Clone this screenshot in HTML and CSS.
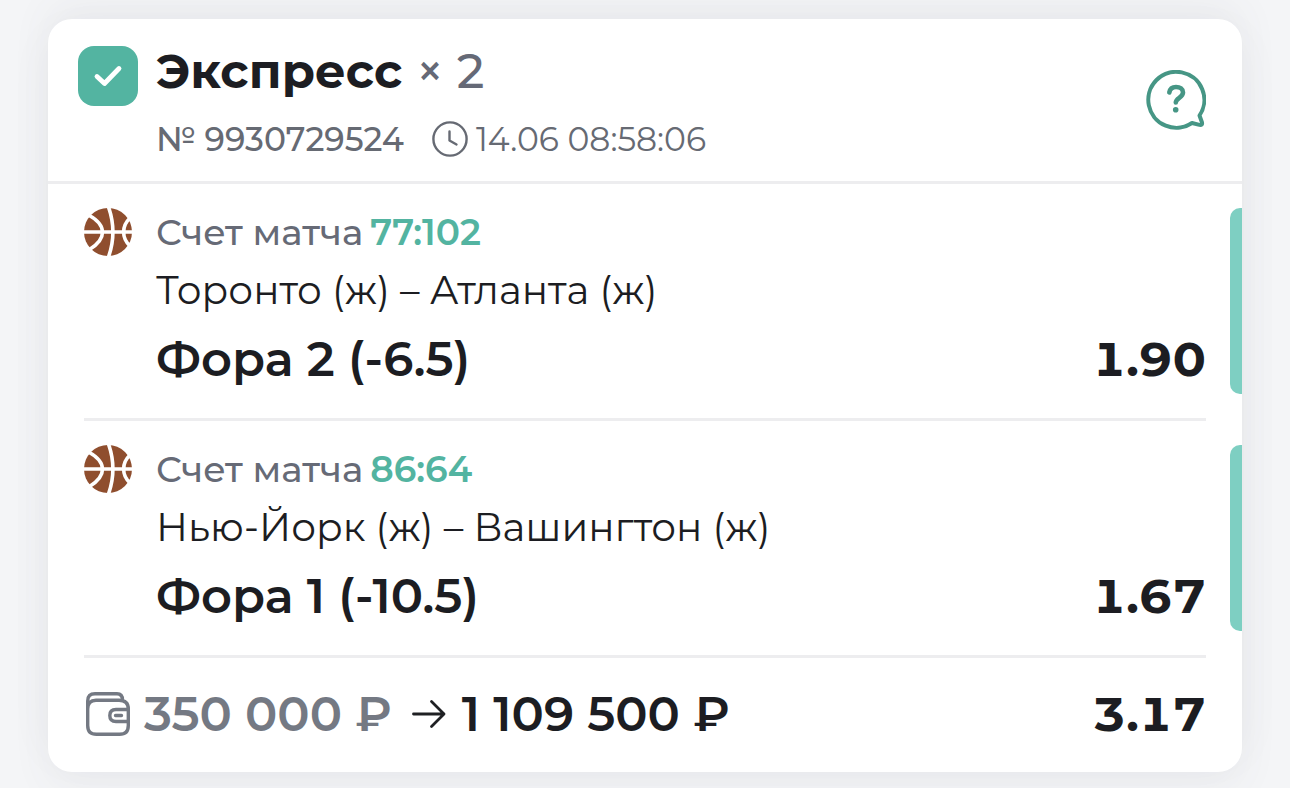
FILE: index.html
```html
<!DOCTYPE html>
<html lang="ru">
<head>
<meta charset="utf-8">
<meta name="viewport" content="width=device-width, initial-scale=1">
<title>Экспресс</title>
<link rel="stylesheet" href="styles.css">
</head>
<body>
<svg class="sprite" aria-hidden="true">
  <symbol id="ball" viewBox="0 0 48 48">
    <circle cx="24" cy="24" r="24" fill="#8f4e2e"/>
    <g fill="none" stroke="#fff" stroke-width="3.6">
      <path d="M0 24H48M24.500 -1C30.500 16 30.500 32 24.500 49M4.500 7C23 17 23 31 5.500 41.500M46 10C37.500 18 37.500 30 46 38"/>
    </g>
  </symbol>
</svg>
<main class="page">
  <article class="card">
    <header class="head">
      <label class="check">
        <input class="check-box" type="checkbox" checked aria-label="Экспресс">
        <svg class="check-mark" viewBox="0 0 60 60" aria-hidden="true"><path d="M19 30.500l7.500 7L41 22.500" fill="none" stroke="#fff" stroke-width="4.800" stroke-linecap="round" stroke-linejoin="round"/></svg>
      </label>
      <div class="head-text">
        <h1 class="title">Экспресс <span class="count">× 2</span></h1>
        <div class="meta">
          <span class="number">№ 9930729524</span>
          <span class="time">
            <svg class="clock" viewBox="0 0 36 36" aria-hidden="true"><g fill="none" stroke="#666a73" stroke-width="2.400" stroke-linecap="round" stroke-linejoin="round"><circle cx="18" cy="18" r="16.600"/><path d="M17.500 10.500V19.500L24.500 23.500"/></g></svg>
            <time>14.06 08:58:06</time>
          </span>
        </div>
      </div>
      <button class="help" type="button" aria-label="Помощь">
        <svg viewBox="0 0 60 60" aria-hidden="true">
          <g fill="none" stroke="#469685" stroke-width="4" stroke-linecap="round" stroke-linejoin="round">
            <path d="M53.500 45.500A28 28 0 1 0 46 53L53.500 54.900Q56.600 55.500 56 52.500Z"/>
            <path stroke-width="4.600" d="M23.300 22.500C24 18.500 26 17 30 17C34 17 37 19 37 22.500C37 27.500 29.800 28 29.800 32.500"/>
          </g>
          <circle cx="29.700" cy="39.700" r="2.800" fill="#469685"/>
        </svg>
      </button>
    </header>

    <section class="event">
      <svg class="ball" aria-hidden="true"><use href="#ball"/></svg>
      <div class="event-text">
        <p class="score"><span>Счет матча</span><b>77:102</b></p>
        <p class="teams">Торонто (ж) – Атланта (ж)</p>
        <div class="bet"><h2>Фора 2 (-6.5)</h2><span class="odds">1.90</span></div>
      </div>
      <span class="stripe"></span>
    </section>

    <section class="event">
      <svg class="ball" aria-hidden="true"><use href="#ball"/></svg>
      <div class="event-text">
        <p class="score"><span>Счет матча</span><b>86:64</b></p>
        <p class="teams">Нью-Йорк (ж) – Вашингтон (ж)</p>
        <div class="bet"><h2>Фора 1 (-10.5)</h2><span class="odds">1.67</span></div>
      </div>
      <span class="stripe"></span>
    </section>

    <footer class="foot">
      <svg class="wallet" viewBox="0 0 44 44" aria-hidden="true">
        <g fill="none" stroke="#747983" stroke-width="3.400" stroke-linejoin="round" stroke-linecap="round">
          <path d="M1.700 17Q1.700 8.200 10 8.200H33Q42.300 8.200 42.300 17V33.500Q42.300 42.300 33.500 42.300H10.500Q1.700 42.300 1.700 33.500ZM1.700 17V9Q1.700 1.700 9 1.700H31Q36.500 1.700 36.500 8M42 17.500H30Q23.800 17.500 23.800 23.500T30 29.500H42M29.500 23.500H35.500"/>
        </g>
      </svg>
      <span class="stake">350 000 ₽</span>
      <svg class="arrow" viewBox="0 0 34 30" aria-hidden="true"><path d="M1.500 15H32M19.500 2.500L32 15L19.500 27.500" fill="none" stroke="#1f2023" stroke-width="2.800" stroke-linecap="round" stroke-linejoin="round"/></svg>
      <span class="win">1 109 500 ₽</span>
      <span class="odds">3.17</span>
    </footer>
  </article>
</main>
</body>
</html>
```
FILE: styles.css
```css
* { box-sizing: border-box; }
body {
  margin: 0;
  background: #f4f5f7;
  color: #1c1d22;
  font-family: Montserrat, Inter, sans-serif;
}
h1, h2, p { margin: 0; }
.sprite { display: none; }
.page { padding: 19px 48px 16px; }
.card {
  background: #fff;
  border-radius: 24px;
  box-shadow: 0 16px 40px rgba(80, 90, 110, 0.06), 0 -16px 40px rgba(80, 90, 110, 0.06);
}
.head {
  display: flex;
  align-items: flex-start;
  padding: 27px 36px 22px 30px;
  border-bottom: 3px solid #ededef;
}
.check { display: grid; width: 60px; height: 60px; margin-right: 18px; }
.check-box, .check-mark { grid-area: 1 / 1; width: 60px; height: 60px; }
.check-box { appearance: none; margin: 0; border-radius: 16px; background: #53b4a1; }
.check-mark { pointer-events: none; z-index: 1; }
.head-text { flex: 1; }
.title {
  font-size: 48px;
  line-height: 50px;
  font-weight: 700;
}
.count { color: #656976; font-weight: 500; }
.meta {
  display: flex;
  gap: 28px;
  margin-top: 23px;
  font-size: 33px;
  line-height: 40px;
  color: #666a73;
}
.number { font-weight: 500; }
.time { display: flex; align-items: center; gap: 8px; font-weight: 400; }
.clock { width: 36px; height: 36px; }
.help { width: 60px; height: 60px; margin-top: 24px; padding: 0; border: 0; background: none; }
.help svg { display: block; }
.event {
  position: relative;
  display: flex;
  gap: 24px;
  margin: 0 36px;
  padding: 24px 0;
  border-bottom: 3px solid #ededef;
}
.ball { width: 48px; height: 48px; }
.event-text { flex: 1; min-height: 186px; }
.score { display: flex; gap: 7px; font-size: 36px; line-height: 48px; font-weight: 500; color: #666a76; }
.score b { color: #53b4a1; font-weight: 600; }
.teams { margin-top: 10px; font-size: 39px; line-height: 48px; font-weight: 400; }
.bet {
  display: flex;
  justify-content: space-between;
  margin-top: 21px;
  font-size: 48px;
  line-height: 48px;
}
.bet h2 { font-size: 48px; font-weight: 600; }
.odds { font-weight: 700; font-variant-numeric: tabular-nums; }
.stripe {
  position: absolute;
  top: 24px;
  bottom: 24px;
  right: -36px;
  width: 12px;
  border-radius: 10px 0 0 10px;
  background: #7ecfc2;
}
.foot {
  display: flex;
  align-items: center;
  padding: 28px 36px 30px;
  font-size: 48px;
  line-height: 56px;
  font-weight: 600;
}
.wallet { width: 44px; height: 44px; margin: 0 14px 0 2px; }
.stake { color: #747983; }
.arrow { width: 34px; height: 30px; margin: 0 16px 0 20px; }
.foot .odds { margin-left: auto; }
```
